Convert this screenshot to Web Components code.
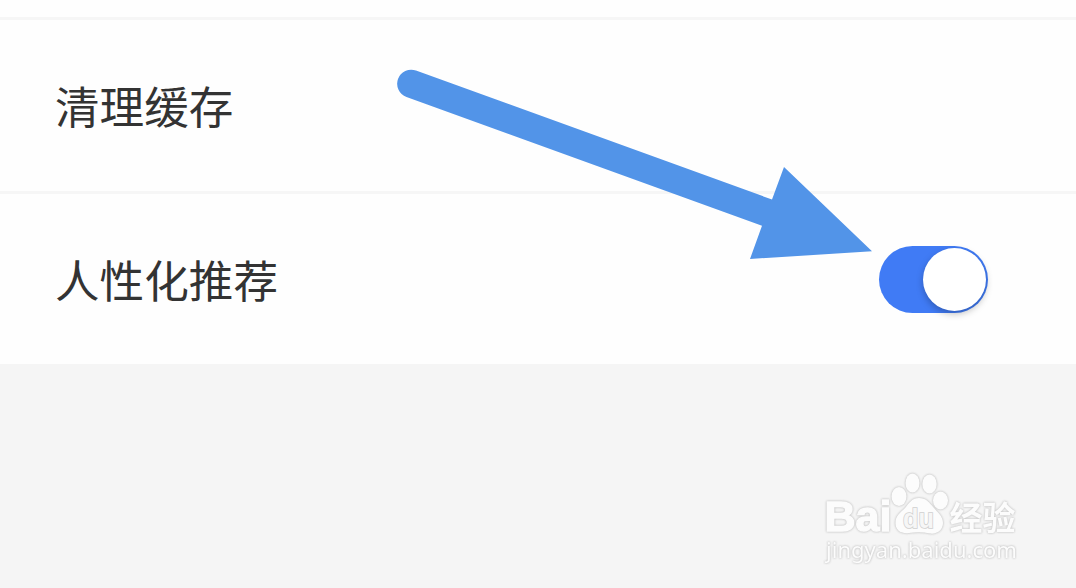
<!DOCTYPE html>
<html lang="zh-CN">
<head>
<meta charset="UTF-8">
<title>设置</title>
<style>
    body {
        margin: 0;
        background: #f5f5f5;
        overflow: hidden;
    }
</style>
</head>
<body>
<settings-page>
    <settings-row label="清理缓存"></settings-row>
    <settings-row label="人性化推荐"><toggle-switch></toggle-switch></settings-row>
    <pointer-arrow slot="overlay"></pointer-arrow>
    <site-watermark slot="overlay"></site-watermark>
</settings-page>

<script>
class SettingsPage extends HTMLElement {
    constructor() {
        super();
        this.attachShadow({ mode: 'open' });
        this.shadowRoot.innerHTML = `
            <style>
                :host {
                    display: block;
                    position: relative;
                    height: 588px;
                    overflow: hidden;
                    background: #f5f5f5;
                    color: #333;
                    font-family: "Noto Sans CJK SC", sans-serif;
                }

                .list {
                    display: flex;
                    flex-direction: column;
                    height: 364px;
                    padding-top: 17px;
                    box-sizing: border-box;
                    background: #fefefe;
                }
            </style>
            <div class="list"><slot></slot></div>
            <slot name="overlay"></slot>
        `;
    }
}

class SettingsRow extends HTMLElement {
    connectedCallback() {
        this.attachShadow({ mode: 'open' });
        this.shadowRoot.innerHTML = `
            <style>
                :host {
                    display: flex;
                    flex: 1;
                    align-items: center;
                    justify-content: space-between;
                    padding: 0 88px 0 55px;
                    border-top: 3px solid #f6f6f6;
                    box-sizing: border-box;
                }

                .label {
                    font-size: 44.6px;
                    line-height: 60px;
                }
            </style>
            <span class="label">${this.getAttribute('label')}</span>
            <slot></slot>
        `;
    }
}

class ToggleSwitch extends HTMLElement {
    constructor() {
        super();
        this.attachShadow({ mode: 'open' });
        this.shadowRoot.innerHTML = `
            <style>
                :host {
                    display: flex;
                    align-items: center;
                    justify-content: flex-end;
                    width: 109px;
                    height: 67px;
                    padding-right: 2px;
                    margin-top: 1px;
                    box-sizing: border-box;
                    border-radius: 34px;
                    background: #407bf5;
                }

                .knob {
                    width: 63px;
                    height: 63px;
                    border-radius: 50%;
                    background: #fff;
                    box-shadow: 0 3px 7px rgba(0, 0, 0, 0.25);
                }
            </style>
            <div class="knob"></div>
        `;
    }
}

class PointerArrow extends HTMLElement {
    constructor() {
        super();
        this.attachShadow({ mode: 'open' });
        this.shadowRoot.innerHTML = `
            <style>
                :host {
                    position: absolute;
                    inset: 0;
                    pointer-events: none;
                }
                svg { display: block; }
            </style>
            <svg width="1076" height="588" viewBox="0 0 1076 588" fill="#5294e8">
                <path d="M416 70.5 L772 199.5 L784 167 L872 251.3 L750 259 L762 225.8 L406.5 97 A14 14 0 0 1 416 70.5 Z"/>
            </svg>
        `;
    }
}

class SiteWatermark extends HTMLElement {
    constructor() {
        super();
        this.attachShadow({ mode: 'open' });
        this.shadowRoot.innerHTML = `
            <style>
                :host {
                    position: absolute;
                    left: 816px;
                    top: 465px;
                }

                svg { display: block; }

                text, ellipse, path { fill: #fcfcfc; }

                /* soft grey edge around every white shape */
                .edge {
                    filter: drop-shadow(0 0 0.8px #c4c4c4) drop-shadow(0 0 0.6px #d8d8d8);
                }

                .bai { font-family: "Liberation Sans", Arial, sans-serif; font-weight: bold; stroke: #fcfcfc; stroke-width: 1.4px; }
                .cjk { font-family: "Noto Sans CJK SC", sans-serif; font-weight: bold; }
                .url { font-family: "Noto Sans", sans-serif; }
                .du {
                    font-family: "Liberation Sans", Arial, sans-serif;
                    font-weight: bold;
                    fill: #f6f6f6;
                    stroke: #d0d0d0;
                    stroke-width: 1.6px;
                    paint-order: stroke;
                }
            </style>
            <svg width="212" height="105" viewBox="0 0 212 105">
                <g class="edge">
                    <text class="bai" x="8.500" y="66.300" font-size="43" textLength="67" lengthAdjust="spacingAndGlyphs">Bai</text>
                    <ellipse cx="83" cy="31.500" rx="7.500" ry="9.500"/>
                    <ellipse cx="96.500" cy="18" rx="7" ry="9.500"/>
                    <ellipse cx="113.500" cy="19" rx="7.200" ry="9.500"/>
                    <ellipse cx="124.500" cy="35.500" rx="7.500" ry="9"/>
                    <path d="M103 33 C96 33 93 38 89 43 C84 48 79 51 79.500 59 C80 66 86 69 93 68 C100 67 107 67 114 68.500 C121 69.500 127 65 127 58 C127 51 122 48 118 43 C113 37 110 33 103 33 Z"/>
                    <text class="cjk" x="133.500" y="64.500" font-size="33">经验</text>
                    <text class="url" x="10" y="93" font-size="21" textLength="191" lengthAdjust="spacingAndGlyphs">jingyan.baidu.com</text>
                </g>
                <text class="du" x="87" y="63" font-size="27" textLength="31" lengthAdjust="spacingAndGlyphs">du</text>
            </svg>
        `;
    }
}

customElements.define('settings-page', SettingsPage);
customElements.define('settings-row', SettingsRow);
customElements.define('toggle-switch', ToggleSwitch);
customElements.define('pointer-arrow', PointerArrow);
customElements.define('site-watermark', SiteWatermark);
</script>
</body>
</html>
